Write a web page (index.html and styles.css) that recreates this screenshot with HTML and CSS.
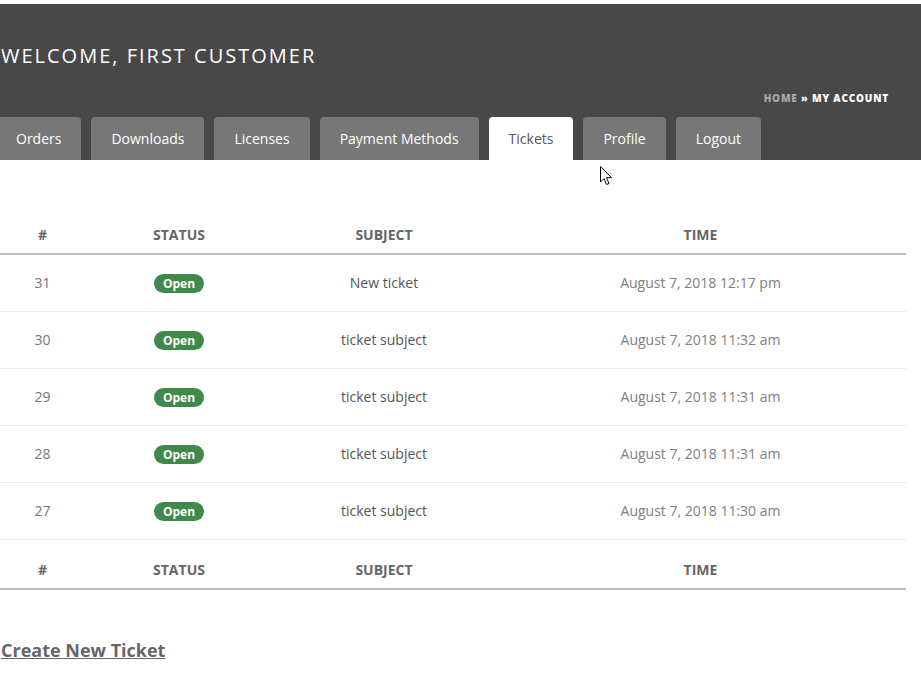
FILE: index.html
```html
<!DOCTYPE html>
<html lang="en">
<head>
<meta charset="utf-8">
<title>My Account - Tickets</title>
<link rel="stylesheet" href="styles.css">
</head>
<body>
<header class="hero">
  <h1 class="hero-title">Welcome, First Customer</h1>
  <nav class="crumbs"><span class="crumb-home">Home</span> &raquo; My Account</nav>
  <ul class="tabs">
    <li class="tab tab-first">Orders</li>
    <li class="tab">Downloads</li>
    <li class="tab">Licenses</li>
    <li class="tab">Payment Methods</li>
    <li class="tab tab-active">Tickets</li>
    <li class="tab">Profile</li>
    <li class="tab">Logout</li>
  </ul>
</header>
<main class="content">
  <table class="tickets">
    <colgroup>
      <col class="c-num"><col class="c-status"><col class="c-subject"><col class="c-time">
    </colgroup>
    <thead>
      <tr><th>#</th><th>Status</th><th>Subject</th><th>Time</th></tr>
    </thead>
    <tbody>
      <tr><td class="num">31</td><td><span class="badge">Open</span></td><td class="subj">New ticket</td><td class="time">August 7, 2018 12:17 pm</td></tr>
      <tr><td class="num">30</td><td><span class="badge">Open</span></td><td class="subj">ticket subject</td><td class="time">August 7, 2018 11:32 am</td></tr>
      <tr><td class="num">29</td><td><span class="badge">Open</span></td><td class="subj">ticket subject</td><td class="time">August 7, 2018 11:31 am</td></tr>
      <tr><td class="num">28</td><td><span class="badge">Open</span></td><td class="subj">ticket subject</td><td class="time">August 7, 2018 11:31 am</td></tr>
      <tr><td class="num">27</td><td><span class="badge">Open</span></td><td class="subj">ticket subject</td><td class="time">August 7, 2018 11:30 am</td></tr>
    </tbody>
    <tfoot>
      <tr><th>#</th><th>Status</th><th>Subject</th><th>Time</th></tr>
    </tfoot>
  </table>
  <a class="create-link" href="#">Create New Ticket</a>
</main>
<svg class="cursor" width="13" height="20" viewBox="0 0 13 20" aria-hidden="true">
  <path d="M0.5 0.5 L0.5 16 L4 12.5 L6.5 18.5 L9 17.5 L6.5 11.7 L11.5 11.7 Z" fill="#fff" stroke="#000" stroke-width="1" stroke-linejoin="miter"/>
</svg>
</body>
</html>
```

FILE: styles.css
```css
* { box-sizing: border-box; }

html, body {
  margin: 0;
  padding: 0;
  background: #fff;
}

body {
  font-family: "Open Sans", "Noto Sans", sans-serif;
  color: #666;
  padding-top: 4px;
  position: relative;
}

.hero {
  background: #484848;
  height: 156px;
  display: flex;
  flex-direction: column;
  padding-top: 37px;
}

.hero-title {
  margin: 0;
  padding-left: 1px;
  font-size: 20px;
  line-height: 30px;
  font-weight: 400;
  letter-spacing: 2px;
  text-transform: uppercase;
  color: #fff;
}

.crumbs {
  margin-top: 20px;
  align-self: flex-end;
  padding-right: 32px;
  font-size: 10px;
  line-height: 14px;
  font-weight: 800;
  letter-spacing: 0.8px;
  text-transform: uppercase;
  color: #fff;
}

.crumb-home { color: #a8a8a8; }

.tabs {
  list-style: none;
  margin: 12px 0 0 -4px;
  padding: 0;
  display: flex;
  gap: 10px;
  height: 43px;
}

.tab {
  background: #777;
  color: #fff;
  font-size: 14px;
  line-height: 43px;
  padding: 0 20px;
  border-radius: 4px 4px 0 0;
}

.tab-active {
  background: #fff;
  color: #555;
}

.content {
  width: 906px;
  padding-top: 56px;
}

.tickets {
  width: 906px;
  border-collapse: collapse;
  table-layout: fixed;
}

.c-num { width: 85px; }
.c-status { width: 188px; }
.c-subject { width: 222px; }
.c-time { width: 411px; }

.tickets th {
  font-size: 14px;
  font-weight: 700;
  text-transform: uppercase;
  color: #666;
  text-align: center;
  line-height: 18px;
}

.tickets thead th {
  padding: 10px 0 9px;
  border-bottom: 2px solid #bbb;
}

.tickets tfoot th {
  padding: 21px 0 9px;
  border-bottom: 2px solid #bbb;
}

.tickets td {
  text-align: center;
  font-size: 14px;
  line-height: 20px;
  height: 57px;
  padding: 0;
  border-bottom: 1px solid #ececec;
}

.tickets .num { color: #777; }
.tickets .subj { color: #555; }
.tickets .time { color: #808080; }

.badge {
  display: inline-block;
  background: #3f8a4b;
  color: #fff;
  font-size: 12px;
  font-weight: 700;
  line-height: 19px;
  width: 50px;
  border-radius: 10px;
  text-align: center;
  vertical-align: middle;
}

.create-link {
  display: inline-block;
  margin-top: 47px;
  font-size: 18px;
  line-height: 26px;
  font-weight: 700;
  color: #666;
  text-decoration: underline;
  padding-left: 1px;
}

.cursor {
  position: absolute;
  left: 600px;
  top: 166px;
}
```
